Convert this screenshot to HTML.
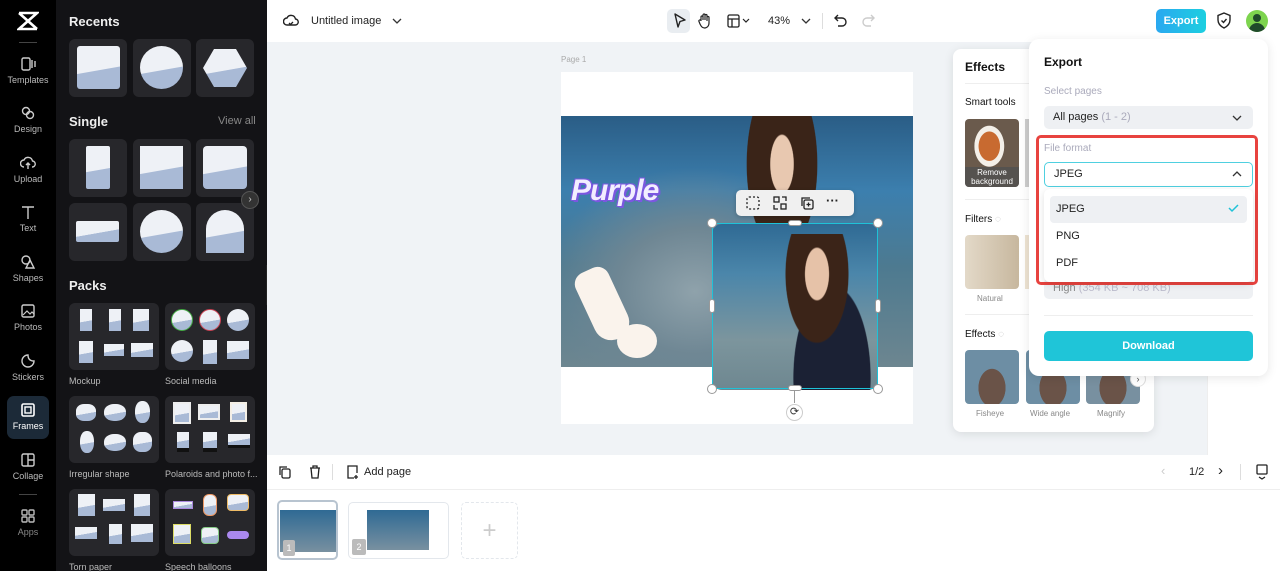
<!DOCTYPE html>
<html><head><meta charset="utf-8"><style>
*{box-sizing:border-box;margin:0;padding:0}
body{width:1280px;height:571px;overflow:hidden;font-family:"Liberation Sans",sans-serif;background:#fff;position:relative}
.abs{position:absolute}
.rail{left:0;top:0;width:56px;height:571px;background:#000}
.ri{position:absolute;left:0;width:56px;text-align:center;color:#bbb;font-size:9px}
.ri svg{display:block;margin:0 auto 3px}
.panel{left:56px;top:0;width:211px;height:571px;background:#131316;color:#fff}
.h{position:absolute;font-weight:bold;font-size:13px;color:#eee}
.tile{position:absolute;background:#27272b;border-radius:6px}
.ph{position:absolute;background:linear-gradient(170deg,#eef1f6 0 55%,#a9bad6 56%);}
.lab{position:absolute;font-size:9px;color:#bbb}
.top{left:267px;top:0;width:1013px;height:42px;background:#fff}
.canvas{left:267px;top:42px;width:940px;height:413px;background:#f0f3f6}
.card{background:#fff;border-radius:8px;box-shadow:0 2px 10px rgba(0,0,0,.1)}
.t{position:absolute;font-size:11px;color:#222}
.g{color:#aab}
</style></head><body>
<div class="abs rail">
 <svg class="abs" style="left:17px;top:11px" width="22" height="20" viewBox="0 0 22 20"><path d="M2 2h18L2 18h18M2 2l18 16" stroke="#fff" stroke-width="2.6" fill="none"/></svg>
 <div class="abs" style="left:19px;top:42px;width:18px;height:1px;background:#444"></div>
 <div class="ri" style="top:56px"><svg width="16" height="16"><rect x="2" y="2" width="8" height="12" rx="1.5" stroke="#ccc" fill="none" stroke-width="1.4"/><path d="M12 4v8M15 5v6" stroke="#ccc" stroke-width="1.4"/></svg>Templates</div>
 <div class="ri" style="top:105px"><svg width="16" height="16"><circle cx="6" cy="6" r="3.5" stroke="#ccc" fill="none" stroke-width="1.4"/><circle cx="10" cy="10" r="3.5" stroke="#ccc" fill="none" stroke-width="1.4"/></svg>Design</div>
 <div class="ri" style="top:155px"><svg width="16" height="16"><path d="M4 12a3.5 3.5 0 010-7 4.5 4.5 0 018.5 1A3 3 0 0112 12M8 14V8M6 10l2-2 2 2" stroke="#ccc" fill="none" stroke-width="1.4"/></svg>Upload</div>
 <div class="ri" style="top:204px"><svg width="16" height="16"><path d="M2 3h12M8 3v12" stroke="#ccc" stroke-width="1.4"/></svg>Text</div>
 <div class="ri" style="top:254px"><svg width="16" height="16"><circle cx="6" cy="6" r="4" stroke="#ccc" fill="none" stroke-width="1.4"/><path d="M10 6l4 8H6z" stroke="#ccc" fill="none" stroke-width="1.4"/></svg>Shapes</div>
 <div class="ri" style="top:303px"><svg width="16" height="16"><rect x="2" y="2" width="12" height="12" rx="1.5" stroke="#ccc" fill="none" stroke-width="1.4"/><path d="M3 12l4-4 3 3 2-2 2 2" stroke="#ccc" fill="none" stroke-width="1.2"/></svg>Photos</div>
 <div class="ri" style="top:353px"><svg width="16" height="16"><path d="M14 8A6 6 0 118 2c0 4 2 6 6 6z" stroke="#ccc" fill="none" stroke-width="1.4"/></svg>Stickers</div>
 <div class="abs" style="left:7px;top:396px;width:42px;height:43px;border-radius:7px;background:#1c2a38"></div>
 <div class="ri" style="top:402px;color:#fff"><svg width="16" height="16"><rect x="2" y="2" width="12" height="12" rx="1.5" stroke="#fff" fill="none" stroke-width="1.6"/><rect x="5" y="5" width="6" height="6" stroke="#fff" fill="none" stroke-width="1.4"/></svg>Frames</div>
 <div class="ri" style="top:452px"><svg width="16" height="16"><rect x="2" y="2" width="12" height="12" rx="1.5" stroke="#ccc" fill="none" stroke-width="1.4"/><path d="M8 2v12M8 8h6" stroke="#ccc" stroke-width="1.4"/></svg>Collage</div>
 <div class="abs" style="left:19px;top:494px;width:18px;height:1px;background:#444"></div>
 <div class="ri" style="top:508px;color:#888"><svg width="16" height="16"><rect x="2" y="2" width="5" height="5" rx="1" stroke="#bbb" fill="none" stroke-width="1.4"/><rect x="9" y="2" width="5" height="5" rx="1" stroke="#bbb" fill="none" stroke-width="1.4"/><rect x="2" y="9" width="5" height="5" rx="1" stroke="#bbb" fill="none" stroke-width="1.4"/><rect x="9" y="9" width="5" height="5" rx="1" stroke="#bbb" fill="none" stroke-width="1.4"/></svg>Apps</div>
</div>
<div class="abs panel">
 <div class="h" style="left:13px;top:14px">Recents</div>
 <div class="tile" style="left:13px;top:39px;width:58px;height:58px"><div class="ph" style="left:8px;top:7px;width:43px;height:43px;border-radius:3px"></div></div>
 <div class="tile" style="left:77px;top:39px;width:58px;height:58px"><div class="ph" style="left:7px;top:7px;width:43px;height:43px;border-radius:50%"></div></div>
 <div class="tile" style="left:140px;top:39px;width:58px;height:58px"><div class="ph" style="left:7px;top:10px;width:44px;height:38px;clip-path:polygon(25% 0,75% 0,100% 50%,75% 100%,25% 100%,0 50%)"></div></div>
 <div class="h" style="left:13px;top:114px">Single</div>
 <div class="abs" style="left:162px;top:115px;font-size:11px;color:#888">View all</div>
 <div class="tile" style="left:13px;top:139px;width:58px;height:58px"><div class="ph" style="left:17px;top:7px;width:24px;height:43px;border-radius:2px"></div></div>
 <div class="tile" style="left:77px;top:139px;width:58px;height:58px"><div class="ph" style="left:7px;top:7px;width:43px;height:43px"></div></div>
 <div class="tile" style="left:140px;top:139px;width:58px;height:58px"><div class="ph" style="left:7px;top:7px;width:44px;height:43px;border-radius:4px"></div></div>
 <div class="tile" style="left:13px;top:203px;width:58px;height:58px"><div class="ph" style="left:7px;top:18px;width:43px;height:21px;border-radius:2px"></div></div>
 <div class="tile" style="left:77px;top:203px;width:58px;height:58px"><div class="ph" style="left:7px;top:7px;width:43px;height:43px;border-radius:50%"></div></div>
 <div class="tile" style="left:140px;top:203px;width:58px;height:58px"><div class="ph" style="left:10px;top:7px;width:38px;height:43px;border-radius:19px 19px 0 0"></div></div>
 <div class="abs" style="left:185px;top:191px;width:18px;height:18px;border-radius:50%;background:#333;border:1px solid #555;color:#ccc;font-size:10px;text-align:center;line-height:16px">›</div>
 <div class="h" style="left:13px;top:278px">Packs</div>
 <div class="tile" style="left:13px;top:303px;width:90px;height:67px">
  <div class="ph" style="left:11px;top:6px;width:12px;height:22px"></div><div class="ph" style="left:40px;top:6px;width:12px;height:22px"></div><div class="ph" style="left:64px;top:6px;width:16px;height:22px"></div>
  <div class="ph" style="left:10px;top:38px;width:14px;height:22px"></div><div class="ph" style="left:35px;top:41px;width:20px;height:12px"></div><div class="ph" style="left:62px;top:40px;width:22px;height:14px"></div></div>
 <div class="tile" style="left:109px;top:303px;width:90px;height:67px">
  <div class="ph" style="left:6px;top:6px;width:22px;height:22px;border-radius:50%;border:1px solid #4a4"></div><div class="ph" style="left:34px;top:6px;width:22px;height:22px;border-radius:50%;border:1px solid #c45"></div><div class="ph" style="left:62px;top:6px;width:22px;height:22px;border-radius:50%"></div>
  <div class="ph" style="left:6px;top:37px;width:22px;height:22px;border-radius:50%"></div><div class="ph" style="left:38px;top:37px;width:14px;height:24px"></div><div class="ph" style="left:62px;top:38px;width:22px;height:18px"></div></div>
 <div class="lab" style="left:13px;top:376px">Mockup</div><div class="lab" style="left:109px;top:376px">Social media</div>
 <div class="tile" style="left:13px;top:396px;width:90px;height:67px">
  <div class="ph" style="left:7px;top:8px;width:20px;height:17px;border-radius:40%"></div><div class="ph" style="left:35px;top:8px;width:22px;height:17px;border-radius:45%"></div><div class="ph" style="left:66px;top:5px;width:15px;height:22px;border-radius:45%"></div>
  <div class="ph" style="left:11px;top:35px;width:14px;height:22px;border-radius:45%"></div><div class="ph" style="left:35px;top:38px;width:22px;height:17px;border-radius:45%"></div><div class="ph" style="left:64px;top:36px;width:19px;height:20px;border-radius:40%"></div></div>
 <div class="tile" style="left:109px;top:396px;width:90px;height:67px">
  <div class="ph" style="left:8px;top:6px;width:18px;height:22px;border:2px solid #eee"></div><div class="ph" style="left:33px;top:8px;width:22px;height:16px;border:2px solid #eee"></div><div class="ph" style="left:65px;top:6px;width:17px;height:20px;border:2px solid #f4efe6"></div>
  <div class="ph" style="left:12px;top:36px;width:12px;height:20px;border-bottom:4px solid #111"></div><div class="ph" style="left:38px;top:36px;width:14px;height:20px;border-bottom:4px solid #111"></div><div class="ph" style="left:63px;top:38px;width:22px;height:14px;border-bottom:3px solid #111"></div></div>
 <div class="lab" style="left:13px;top:469px">Irregular shape</div><div class="lab" style="left:109px;top:469px">Polaroids and photo f...</div>
 <div class="tile" style="left:13px;top:489px;width:90px;height:67px">
  <div class="ph" style="left:9px;top:5px;width:17px;height:22px"></div><div class="ph" style="left:34px;top:10px;width:22px;height:12px"></div><div class="ph" style="left:65px;top:5px;width:16px;height:22px"></div>
  <div class="ph" style="left:6px;top:38px;width:22px;height:12px"></div><div class="ph" style="left:40px;top:35px;width:13px;height:20px"></div><div class="ph" style="left:62px;top:35px;width:22px;height:18px"></div></div>
 <div class="tile" style="left:109px;top:489px;width:90px;height:67px">
  <div class="ph" style="left:8px;top:12px;width:20px;height:8px;border:1px solid #a8d"></div><div class="ph" style="left:38px;top:5px;width:14px;height:22px;border:1px solid #e96;border-radius:6px"></div><div class="ph" style="left:62px;top:5px;width:22px;height:17px;border:1px solid #eb6;border-radius:4px"></div>
  <div class="ph" style="left:8px;top:35px;width:18px;height:20px;border:1px solid #dd6"></div><div class="ph" style="left:36px;top:38px;width:18px;height:17px;border:1px solid #8c8;border-radius:4px"></div><div class="abs" style="left:62px;top:42px;width:22px;height:8px;background:#a8e;border-radius:4px"></div></div>
 <div class="lab" style="left:13px;top:562px">Torn paper</div><div class="lab" style="left:109px;top:562px">Speech balloons</div>
</div>
<div class="abs" style="left:266px;top:265px;width:7px;height:40px;background:#222;border-radius:0 5px 5px 0"></div>

<div class="abs top">
 <svg class="abs" style="left:16px;top:13px" width="16" height="16"><path d="M4 12a3.5 3.5 0 010-7 4.5 4.5 0 018.5 1A3 3 0 0112 12z" stroke="#222" fill="none" stroke-width="1.4"/><path d="M6 10l1.5 1.5L10 9" stroke="#222" fill="none" stroke-width="1.3"/></svg>
 <div class="t" style="left:44px;top:15px">Untitled image</div>
 <svg class="abs" style="left:125px;top:17px" width="10" height="8"><path d="M1 2l4 4 4-4" stroke="#333" fill="none" stroke-width="1.3"/></svg>
 <div class="abs" style="left:400px;top:9px;width:23px;height:24px;background:#e9edf1;border-radius:5px"></div>
 <svg class="abs" style="left:406px;top:13px" width="14" height="16"><path d="M2 1l10 6-5 1.5L5 14z" stroke="#222" fill="none" stroke-width="1.4" stroke-linejoin="round"/></svg>
 <svg class="abs" style="left:431px;top:12px" width="14" height="17"><path d="M3 9V5a1 1 0 012 0v3V3a1 1 0 012 0v5V3.5a1 1 0 012 0V9V5.5a1 1 0 012 0V11c0 3-2 5-4.5 5S3 14 2 12L1 9.5a1 1 0 012-1z" stroke="#222" fill="none" stroke-width="1.2"/></svg>
 <svg class="abs" style="left:460px;top:14px" width="25" height="14"><rect x="1" y="1" width="11" height="12" rx="1.5" stroke="#222" fill="none" stroke-width="1.3"/><path d="M1 5h11M5 5v8" stroke="#222" stroke-width="1.3"/><path d="M16 5l3 3 3-3" stroke="#222" fill="none" stroke-width="1.2"/></svg>
 <div class="t" style="left:501px;top:15px">43%</div>
 <svg class="abs" style="left:534px;top:17px" width="10" height="8"><path d="M1 2l4 4 4-4" stroke="#333" fill="none" stroke-width="1.3"/></svg>
 <div class="abs" style="left:555px;top:13px;width:1px;height:16px;background:#ddd"></div>
 <svg class="abs" style="left:567px;top:13px" width="14" height="16"><path d="M4 2L1 5l3 3M1 5h7a4 4 0 010 8H4" stroke="#222" fill="none" stroke-width="1.4"/></svg>
 <svg class="abs" style="left:594px;top:13px" width="14" height="16"><path d="M10 2l3 3-3 3M13 5H6a4 4 0 000 8h4" stroke="#ccc" fill="none" stroke-width="1.4"/></svg>
 <div class="abs" style="left:889px;top:9px;width:50px;height:24px;border-radius:5px;background:linear-gradient(90deg,#2aa8f0,#1ccfe0);color:#fff;font-size:11px;font-weight:bold;text-align:center;line-height:24px">Export</div>
 <svg class="abs" style="left:950px;top:12px" width="14" height="17"><path d="M7 1l6 2.5V8c0 4-3 6.5-6 8-3-1.5-6-4-6-8V3.5z" stroke="#222" fill="none" stroke-width="1.4"/><path d="M4.5 8.5l2 2 3-3.5" stroke="#222" fill="none" stroke-width="1.4"/></svg>
 <div class="abs" style="left:979px;top:10px;width:22px;height:22px;border-radius:50%;background:#7dd44e;overflow:hidden"><div class="abs" style="left:7px;top:4px;width:8px;height:8px;border-radius:50%;background:#1f4a2a"></div><div class="abs" style="left:3px;top:13px;width:16px;height:12px;border-radius:8px 8px 0 0;background:#1f4a2a"></div></div>
</div>

<div class="abs canvas">
 <div class="abs" style="left:294px;top:13px;font-size:8px;color:#aaa">Page 1</div>
 <div class="abs" style="left:294px;top:30px;width:352px;height:352px;background:#fff"></div>
 <div class="abs" style="left:294px;top:74px;width:352px;height:251px;background:radial-gradient(ellipse at 38% 70%,#8fa2ab 0,#6f8794 25%,transparent 50%),linear-gradient(180deg,#2a5d86 0,#3c7fae 30%,#4d7a90 60%,#6d8690 100%)"></div>
 <div class="abs" style="left:470px;top:74px;width:90px;height:160px;background:radial-gradient(ellipse at 50% 30%,#e8c8b0 0 18%,#3a2418 19% 55%,transparent 56%)"></div>
 <div class="abs" style="left:304px;top:132px;font-size:30px;font-weight:bold;font-style:italic;color:#f2eeff;letter-spacing:-1px;text-shadow:2px 2px 0 #7b57e0,-1px -1px 0 #7b57e0,1px -1px 0 #7b57e0,-1px 1px 0 #7b57e0">Purple</div>
 <div class="abs" style="left:318px;top:225px;width:36px;height:75px;background:#faf3ec;border-radius:20px 20px 30px 30px;transform:rotate(-25deg)"></div>
 <div class="abs" style="left:350px;top:282px;width:40px;height:34px;background:#faf3ec;border-radius:50%"></div>
 <div class="abs" style="left:445px;top:182px;width:166px;height:166px;border-radius:10px;overflow:hidden;background:linear-gradient(180deg,#2f6a94 0,#4b86aa 30%,#7c959d 70%,#6e8790 100%)"><div class="abs" style="left:60px;top:10px;width:100px;height:160px;background:radial-gradient(ellipse at 45% 25%,#e6c2a8 0 15%,#3b2418 16% 40%,transparent 41%),radial-gradient(ellipse at 60% 90%,#1b2134 0 45%,transparent 46%)"></div></div>
 <div class="abs" style="left:445px;top:181px;width:166px;height:166px;border:1.5px solid #1fc2d8"></div>
 <div class="abs" style="left:440px;top:176px;width:10px;height:10px;border-radius:50%;background:#fff;border:1px solid #999"></div>
 <div class="abs" style="left:606px;top:176px;width:10px;height:10px;border-radius:50%;background:#fff;border:1px solid #999"></div>
 <div class="abs" style="left:440px;top:342px;width:10px;height:10px;border-radius:50%;background:#fff;border:1px solid #999"></div>
 <div class="abs" style="left:606px;top:342px;width:10px;height:10px;border-radius:50%;background:#fff;border:1px solid #999"></div>
 <div class="abs" style="left:521px;top:178px;width:14px;height:6px;border-radius:3px;background:#fff;border:1px solid #999"></div>
 <div class="abs" style="left:521px;top:343px;width:14px;height:6px;border-radius:3px;background:#fff;border:1px solid #999"></div>
 <div class="abs" style="left:442px;top:257px;width:6px;height:14px;border-radius:3px;background:#fff;border:1px solid #999"></div>
 <div class="abs" style="left:608px;top:257px;width:6px;height:14px;border-radius:3px;background:#fff;border:1px solid #999"></div>
 <div class="abs" style="left:527px;top:349px;width:1px;height:12px;background:#999"></div>
 <div class="abs" style="left:519px;top:362px;width:17px;height:17px;border-radius:50%;background:#fff;border:1px solid #ccc;font-size:11px;text-align:center;line-height:15px;color:#333">⟳</div>
 <div class="abs" style="left:469px;top:148px;width:118px;height:26px;background:#f0f0f0;border-radius:5px;box-shadow:0 1px 4px rgba(0,0,0,.2)">
  <svg class="abs" style="left:10px;top:6px" width="14" height="14"><rect x="1" y="1" width="12" height="12" rx="2" stroke="#222" fill="none" stroke-width="1.3" stroke-dasharray="2 2"/></svg>
  <svg class="abs" style="left:37px;top:6px" width="14" height="14"><rect x="1" y="1" width="5" height="5" stroke="#222" fill="none" stroke-width="1.3"/><rect x="8" y="8" width="5" height="5" stroke="#222" fill="none" stroke-width="1.3"/><path d="M9 1h4v4M1 9v4h4" stroke="#222" fill="none" stroke-width="1.3"/></svg>
  <svg class="abs" style="left:64px;top:6px" width="14" height="14"><rect x="4" y="4" width="9" height="9" rx="1.5" stroke="#222" fill="none" stroke-width="1.3"/><path d="M2 10V2h8M8.5 6.5v4M6.5 8.5h4" stroke="#222" fill="none" stroke-width="1.3"/></svg>
  <div class="abs" style="left:90px;top:3px;font-size:13px;font-weight:bold;color:#222">···</div>
 </div>
</div>
<div class="abs" style="left:1207px;top:42px;width:73px;height:413px;background:#fff;border-left:1px solid #eee"></div>

<div class="abs card" style="left:953px;top:49px;width:201px;height:383px">
 <div class="abs" style="left:12px;top:11px;font-weight:bold;font-size:12px;color:#111">Effects</div>
 <div class="abs" style="left:12px;top:34px;width:180px;height:1px;background:#eee"></div>
 <div class="abs" style="left:12px;top:48px;font-size:10px;color:#111">Smart tools</div>
 <div class="abs" style="left:12px;top:70px;width:54px;height:68px;border-radius:4px;background:radial-gradient(ellipse at 45% 40%,#c86a30 0 25%,#f3efe8 26% 35%,#6a5a4c 36%)"></div>
 <div class="abs" style="left:12px;top:118px;width:54px;height:20px;background:rgba(80,80,80,.8);border-radius:0 0 4px 4px;color:#fff;font-size:8px;text-align:center;line-height:9px;padding-top:1px">Remove background</div>
 <div class="abs" style="left:72px;top:70px;width:5px;height:68px;background:#ccc"></div>
 <div class="abs" style="left:12px;top:150px;width:180px;height:1px;background:#eee"></div>
 <div class="abs" style="left:12px;top:165px;font-size:10px;color:#111">Filters <span style="color:#bbb">◌</span></div>
 <div class="abs" style="left:12px;top:186px;width:54px;height:54px;border-radius:4px;background:linear-gradient(90deg,#e3d9c8,#c7b79e)"></div>
 <div class="abs" style="left:72px;top:186px;width:5px;height:54px;background:#eee3d2"></div>
 <div class="abs" style="left:24px;top:245px;font-size:8px;color:#888">Natural</div>
 <div class="abs" style="left:12px;top:265px;width:180px;height:1px;background:#eee"></div>
 <div class="abs" style="left:12px;top:280px;font-size:10px;color:#111">Effects <span style="color:#bbb">◌</span></div>
 <div class="abs" style="left:12px;top:301px;width:54px;height:54px;border-radius:4px;background:radial-gradient(ellipse at 50% 70%,#6a5348 0 35%,#6d8ea4 36%)"></div>
 <div class="abs" style="left:73px;top:301px;width:54px;height:54px;border-radius:4px;background:radial-gradient(ellipse at 50% 70%,#6a5348 0 35%,#6d8ea4 36%)"></div>
 <div class="abs" style="left:133px;top:301px;width:54px;height:54px;border-radius:4px;background:radial-gradient(ellipse at 50% 70%,#6a5348 0 35%,#7890a0 36%)"></div>
 <div class="abs" style="left:177px;top:322px;width:16px;height:16px;border-radius:50%;background:#fff;border:1px solid #ddd;font-size:9px;text-align:center;line-height:14px;color:#555">›</div>
 <div class="abs" style="left:23px;top:360px;font-size:8px;color:#888">Fisheye</div>
 <div class="abs" style="left:77px;top:360px;font-size:8px;color:#888">Wide angle</div>
 <div class="abs" style="left:144px;top:360px;font-size:8px;color:#888">Magnify</div>
</div>

<div class="abs card" style="left:1029px;top:39px;width:239px;height:337px;border-radius:10px">
 <div class="abs" style="left:15px;top:16px;font-weight:bold;font-size:12px;color:#111">Export</div>
 <div class="abs" style="left:15px;top:47px;font-size:10px;color:#aab">Select pages</div>
 <div class="abs" style="left:15px;top:67px;width:209px;height:23px;background:#eef0f3;border-radius:5px"></div>
 <div class="abs" style="left:24px;top:72px;font-size:11px;color:#222">All pages <span style="color:#aab">(1 - 2)</span></div>
 <svg class="abs" style="left:203px;top:75px" width="10" height="8"><path d="M1 2l4 4 4-4" stroke="#333" fill="none" stroke-width="1.3"/></svg>
 <div class="abs" style="left:15px;top:239px;width:209px;height:21px;background:#eef0f3;border-radius:5px"></div>
 <div class="abs" style="left:24px;top:243px;font-size:11px;color:#888">High <span style="color:#bbc">(354 KB ~ 708 KB)</span></div>
 <div class="abs" style="left:15px;top:276px;width:209px;height:1px;background:#eee"></div>
 <div class="abs" style="left:15px;top:292px;width:209px;height:30px;background:#1fc5d8;border-radius:5px;color:#fff;font-size:11px;font-weight:bold;text-align:center;line-height:30px">Download</div>
</div>
<div class="abs" style="left:1036px;top:135px;width:222px;height:150px;border:3px solid #e8433f;border-radius:5px"></div>
<div class="abs" style="left:1044px;top:143px;font-size:10px;color:#aab">File format</div>
<div class="abs" style="left:1044px;top:162px;width:209px;height:25px;border:1.5px solid #4fd0e0;border-radius:5px;background:#fff"></div>
<div class="abs" style="left:1054px;top:168px;font-size:11px;color:#222">JPEG</div>
<svg class="abs" style="left:1232px;top:170px" width="10" height="8"><path d="M1 6l4-4 4 4" stroke="#333" fill="none" stroke-width="1.3"/></svg>
<div class="abs" style="left:1044px;top:189px;width:209px;height:93px;background:#fff;border-radius:6px;box-shadow:0 2px 8px rgba(0,0,0,.12)"></div>
<div class="abs" style="left:1050px;top:196px;width:197px;height:27px;background:#eef0f3;border-radius:4px"></div>
<div class="abs" style="left:1056px;top:203px;font-size:11px;color:#222">JPEG</div>
<svg class="abs" style="left:1228px;top:204px" width="11" height="9"><path d="M1 4l3 3 6-6" stroke="#1fc2d8" fill="none" stroke-width="1.5"/></svg>
<div class="abs" style="left:1056px;top:230px;font-size:11px;color:#222">PNG</div>
<div class="abs" style="left:1056px;top:257px;font-size:11px;color:#222">PDF</div>

<div class="abs" style="left:267px;top:455px;width:1013px;height:35px;background:#fff;border-bottom:1px solid #eee">
 <svg class="abs" style="left:11px;top:10px" width="14" height="14"><rect x="4" y="4" width="8" height="9" rx="1.5" stroke="#222" fill="none" stroke-width="1.3"/><path d="M2 10V2h7" stroke="#222" fill="none" stroke-width="1.3"/></svg>
 <svg class="abs" style="left:41px;top:10px" width="14" height="14"><path d="M2 3h10M5 3V1h4v2M3 3l1 10h6l1-10" stroke="#222" fill="none" stroke-width="1.3"/></svg>
 <div class="abs" style="left:65px;top:9px;width:1px;height:16px;background:#ddd"></div>
 <svg class="abs" style="left:79px;top:9px" width="14" height="16"><path d="M8 14H2V2h9v7M10 11v4M8 13h4" stroke="#222" fill="none" stroke-width="1.3"/></svg>
 <div class="t" style="left:97px;top:11px">Add page</div>
 <div class="abs" style="left:894px;top:8px;font-size:13px;color:#ccc">‹</div>
 <div class="t" style="left:922px;top:11px">1/2</div>
 <div class="abs" style="left:951px;top:7px;font-size:15px;color:#222">›</div>
 <div class="abs" style="left:973px;top:9px;width:1px;height:16px;background:#ddd"></div>
 <svg class="abs" style="left:989px;top:9px" width="12" height="16"><rect x="1" y="1" width="10" height="9" rx="1" stroke="#222" fill="none" stroke-width="1.3"/><path d="M3 13l3 2 3-2" stroke="#222" fill="none" stroke-width="1.2"/></svg>
</div>
<div class="abs" style="left:277px;top:500px;width:61px;height:60px;border:2px solid #b8c4d0;border-radius:5px;overflow:hidden;background:#fff">
 <div class="abs" style="left:1px;top:8px;width:56px;height:42px;background:linear-gradient(180deg,#2f6a94,#7890a0)"></div>
 <div class="abs" style="left:4px;top:38px;width:12px;height:16px;background:#bbb;color:#fff;font-size:9px;text-align:center;line-height:16px;border-radius:2px">1</div>
</div>
<div class="abs" style="left:348px;top:502px;width:101px;height:57px;border:1px solid #e3e7ec;border-radius:5px;background:#fff">
 <div class="abs" style="left:18px;top:7px;width:62px;height:40px;background:linear-gradient(180deg,#2f6a94,#7890a0)"></div>
 <div class="abs" style="left:3px;top:36px;width:14px;height:16px;background:#bbb;color:#fff;font-size:9px;text-align:center;line-height:16px;border-radius:2px">2</div>
</div>
<div class="abs" style="left:461px;top:502px;width:57px;height:57px;border:1px dashed #e3e7ec;border-radius:5px;color:#ccc;font-size:24px;text-align:center;line-height:55px;font-weight:lighter">+</div>
</body></html>
